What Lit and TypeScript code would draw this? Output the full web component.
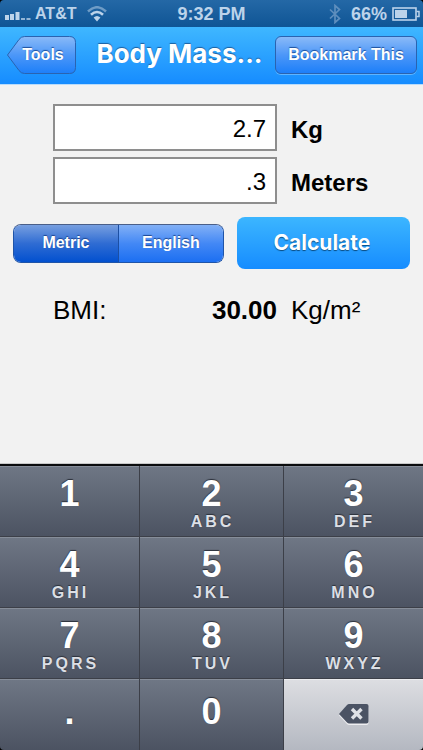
import { LitElement, html, css, nothing } from "lit";
import { customElement, state } from "lit/decorators.js";
import { classMap } from "lit/directives/class-map.js";

const KEYS: Array<[string, string]> = [
  ["1", ""],
  ["2", "ABC"],
  ["3", "DEF"],
  ["4", "GHI"],
  ["5", "JKL"],
  ["6", "MNO"],
  ["7", "PQRS"],
  ["8", "TUV"],
  ["9", "WXYZ"],
  [".", ""],
  ["0", ""],
];

@customElement("status-bar")
class StatusBar extends LitElement {
  static styles = css`
    :host {
      display: grid;
      grid-template-columns: 1fr auto 1fr;
      align-items: center;
      height: 27px;
      padding: 0 3px;
      box-sizing: border-box;
      border-radius: 4px 4px 0 0;
      background: linear-gradient(#2468a6, #0f5595);
      color: #bcd3ea;
      font: bold 18px/26px "Liberation Sans", Arial, sans-serif;
      white-space: nowrap;
    }
    .side {
      display: flex;
      align-items: center;
    }
    .signal {
      margin-left: 2px;
    }
    .carrier {
      font-size: 16px;
      margin: 0 11px 0 4px;
    }
    .right {
      justify-content: flex-end;
    }
    .bluetooth {
      margin-right: 10px;
    }
    .battery {
      margin-left: 5px;
    }
    svg {
      display: block;
    }
  `;

  render() {
    return html`
      <div class="side">
        <svg class="signal" width="26" height="12" viewBox="0 0 26 12" fill="#bcd3ea" aria-hidden="true">
          <path d="M0 7h4v5H0zM5 6h4v6H5zM10.500 4h4v8h-4z" />
          <path d="M16 10h4v2h-4zM21.500 10h4v2h-4z" opacity=".75" />
        </svg>
        <span class="carrier">AT&amp;T</span>
        <svg width="20" height="16" viewBox="0 0 20 16" fill="none" aria-hidden="true">
          <path d="M1 5.500Q10-3 19 5.500" stroke="#6f9cc6" stroke-width="2.500" />
          <path d="M4 8.800Q10 3.200 16 8.800" stroke="#bcd3ea" stroke-width="2.600" />
          <path d="M6.600 11.600Q10 8.200 13.400 11.600L10 15.400z" fill="#bcd3ea" />
        </svg>
      </div>
      <span>9:32 PM</span>
      <div class="side right">
        <svg class="bluetooth" width="12" height="20" viewBox="0 0 12 20" fill="none" aria-hidden="true">
          <path d="M1 5.500L10.500 14.500L6 18.500V1.500L10.500 5.500L1 14.500" stroke="#5e8ebd" stroke-width="1.700" />
        </svg>
        <span>66%</span>
        <svg class="battery" width="28" height="14" viewBox="0 0 28 14" aria-hidden="true">
          <rect x="1" y="1" width="23" height="12" fill="none" stroke="#bcd3ea" stroke-width="1.600" />
          <rect x="3" y="3" width="12" height="8" fill="#bcd3ea" />
          <path d="M24.500 4.500h2.500v5h-2.500" fill="none" stroke="#bcd3ea" stroke-width="1.500" />
        </svg>
      </div>
    `;
  }
}

@customElement("number-pad")
class NumberPad extends LitElement {
  static styles = css`
    :host {
      display: grid;
      grid-template-columns: 140fr 144fr 139fr;
      grid-auto-rows: 71px;
      border-top: 2px solid #0b0c0e;
      border-radius: 0 0 4px 4px;
      box-shadow: 0 -1px 0 #c9c9c9;
      overflow: hidden;
    }
    .key {
      display: flex;
      flex-direction: column;
      align-items: center;
      min-width: 0;
      margin: 0;
      padding: 9px 0 0;
      border: 0;
      border-right: 1px solid #3c3f48;
      border-bottom: 1px solid #3c3f48;
      border-radius: 0;
      background: linear-gradient(#6f7785, #4c5362);
      box-shadow: inset 0 1px 0 #868d99;
      color: #fff;
      font: bold 36px/38px "Liberation Sans", Arial, sans-serif;
      text-shadow: 0 -1px 1px #2b303a;
    }
    .key:nth-child(3n) {
      border-right: 0;
    }
    .key:nth-child(n + 10) {
      border-bottom: 0;
    }
    .letters {
      padding-left: 2px;
      color: #dcdfe5;
      font-size: 16px;
      line-height: 18px;
      letter-spacing: 3px;
    }
    .last {
      padding-top: 14px;
    }
    .delete {
      justify-content: center;
      padding: 0;
      background: linear-gradient(#dddee2, #b4b8c1);
      box-shadow: inset 0 1px 0 #ebebee;
    }
  `;

  private press(key: string) {
    this.dispatchEvent(new CustomEvent("key-press", { detail: key }));
  }

  render() {
    return html`
      ${KEYS.map(
        ([digit, letters], i) => html`<button
          type="button"
          class=${classMap({ key: true, last: i > 8 })}
          @click=${() => this.press(digit)}
        >
          <span>${digit}</span>
          ${letters ? html`<span class="letters">${letters}</span>` : nothing}
        </button>`
      )}
      <button type="button" class="key delete" aria-label="Delete" @click=${() => this.press("delete")}>
        <svg width="30" height="22" viewBox="0 0 30 22" aria-hidden="true">
          <path d="M0 11.500L8 2.700Q9 2 10 2H27.500Q29.500 2 29.500 4V19Q29.500 21 27.500 21H10Q9 21 8 20z" fill="#eeeef1" />
          <path d="M0 10L8 1Q9 0 10 0H27.500Q29.500 0 29.500 2V17.500Q29.500 19.500 27.500 19.500H10Q9 19.500 8 18.500z" fill="#4b5364" />
          <path d="M13 5L22.500 14.500M22.500 5L13 14.500" stroke="#dfe1e6" stroke-width="3.400" />
        </svg>
      </button>
    `;
  }
}

@customElement("app-root")
class AppRoot extends LitElement {
  static styles = css`
    :host {
      display: flex;
      flex-direction: column;
      min-height: 100vh;
      background: #000;
      color: #000;
      font-family: "Liberation Sans", Arial, sans-serif;
    }
    button {
      margin: 0;
      border: 0;
      padding: 0;
      color: #fff;
      font: bold 16px/20px "Liberation Sans", Arial, sans-serif;
      white-space: nowrap;
    }
    .nav {
      display: flex;
      align-items: center;
      height: 58px;
      box-sizing: border-box;
      padding: 0 6px 2px;
      border-bottom: 1px solid #b9dcfb;
      background: linear-gradient(#3fb7ff, #168cff);
    }
    .back {
      position: relative;
      width: 70px;
      height: 38px;
      padding-left: 4px;
      background: none;
      text-shadow: 0 -1px 1px #1c4f9c;
    }
    .back-shape {
      position: absolute;
      inset: 0;
    }
    .back-text {
      position: relative;
    }
    .title {
      flex: 1;
      margin: 0;
      padding: 0 0 2px 8px;
      color: #fff;
      font: bold 26px/32px Inter, "Open Sans", sans-serif;
      text-align: center;
      text-shadow: 0 -1px 1px #1c5f9f;
      white-space: nowrap;
    }
    .bookmark {
      width: 142px;
      height: 38px;
      border: 1px solid #2a63b0;
      border-radius: 6px;
      background: linear-gradient(#8abaf8, #4c97f8 50%, #1d7ff9);
      box-shadow: 0 1px 0 #5fb4ff;
      text-shadow: 0 -1px 1px #1c4f9c;
    }
    main {
      flex: 1;
      padding: 19px 0 20px;
      background: #f2f2f2;
    }
    .fields,
    .result {
      display: grid;
      grid-template-columns: 1fr 132px;
      column-gap: 14px;
      row-gap: 6px;
      align-items: center;
      padding-left: 53px;
    }
    .field {
      width: 100%;
      height: 47px;
      box-sizing: border-box;
      border: 2px solid #8e8e8e;
      border-radius: 0;
      padding: 3px 9px 0;
      background: #fff;
      color: #000;
      font: 24px/28px "Liberation Sans", Arial, sans-serif;
      text-align: right;
      outline: 0;
    }
    .unit {
      padding-top: 4px;
      font-size: 24px;
      font-weight: bold;
      line-height: 28px;
    }
    .actions {
      display: flex;
      align-items: center;
      gap: 13px;
      padding: 13px 13px 0;
    }
    .segments {
      flex: 211;
      display: flex;
      height: 39px;
      box-sizing: border-box;
      border: 1px solid #1f54a8;
      border-top-color: #4a5f88;
      border-radius: 8px;
      overflow: hidden;
    }
    .segment {
      flex: 1;
      background: linear-gradient(#82b0f6, #4388f5 50%, #1c6ff2);
      text-shadow: 0 -1px 1px #1c4590;
    }
    .segment + .segment {
      border-left: 1px solid #1c4fa3;
    }
    .selected {
      background: linear-gradient(#779fe0, #2f6cd3 50%, #0250cf);
    }
    .calculate {
      flex: 172;
      height: 52px;
      padding-right: 3px;
      border-radius: 8px;
      background: linear-gradient(#3cb6ff, #168cff);
      font: bold 21px/26px Inter, "Open Sans", sans-serif;
      text-shadow: 0 1px 1px #0b4c80;
    }
    .result {
      padding-top: 26px;
      font-size: 26px;
      line-height: 30px;
    }
    .bmi {
      display: flex;
      justify-content: space-between;
    }
  `;

  @state() private metric = true;
  @state() private weight = "2.7";
  @state() private size = ".3";
  @state() private bmi = "30.00";

  private calculate() {
    const factor = this.metric ? 1 : 703;
    this.bmi = ((Number(this.weight) * factor) / Number(this.size) ** 2).toFixed(2);
  }

  private onKey(e: CustomEvent<string>) {
    this.size = e.detail === "delete" ? this.size.slice(0, -1) : this.size + e.detail;
  }

  render() {
    return html`
      <status-bar></status-bar>
      <header class="nav">
        <button type="button" class="back">
          <svg class="back-shape" width="70" height="38" viewBox="0 0 70 38" aria-hidden="true">
            <defs>
              <linearGradient id="face" x1="0" y1="0" x2="0" y2="1">
                <stop offset="0" stop-color="#8abaf8" />
                <stop offset=".5" stop-color="#4c97f8" />
                <stop offset="1" stop-color="#1d7ff9" />
              </linearGradient>
            </defs>
            <path
              d="M1.500 19L13 3.500Q15 .5 18.500 .5H63.500Q69.500 .5 69.500 6.500V31.500Q69.500 37.500 63.500 37.500H18.500Q15 37.500 13 34.500z"
              fill="url(#face)"
              stroke="#2a63b0"
            />
          </svg>
          <span class="back-text">Tools</span>
        </button>
        <h1 class="title">Body Mass...</h1>
        <button type="button" class="bookmark">Bookmark This</button>
      </header>
      <main>
        <div class="fields">
          <input
            id="weight"
            class="field"
            inputmode="decimal"
            .value=${this.weight}
            @input=${(e: Event) => (this.weight = (e.target as HTMLInputElement).value)}
          />
          <label class="unit" for="weight">${this.metric ? "Kg" : "Pounds"}</label>
          <input
            id="size"
            class="field"
            inputmode="decimal"
            .value=${this.size}
            @input=${(e: Event) => (this.size = (e.target as HTMLInputElement).value)}
          />
          <label class="unit" for="size">${this.metric ? "Meters" : "Inches"}</label>
        </div>
        <div class="actions">
          <div class="segments" role="group">
            <button
              type="button"
              class=${classMap({ segment: true, selected: this.metric })}
              aria-pressed=${this.metric}
              @click=${() => (this.metric = true)}
            >
              Metric
            </button>
            <button
              type="button"
              class=${classMap({ segment: true, selected: !this.metric })}
              aria-pressed=${!this.metric}
              @click=${() => (this.metric = false)}
            >
              English
            </button>
          </div>
          <button type="button" class="calculate" @click=${this.calculate}>Calculate</button>
        </div>
        <div class="result">
          <div class="bmi"><span>BMI:</span><strong>${this.bmi}</strong></div>
          <span>${this.metric ? "Kg/m²" : "lb/in²"}</span>
        </div>
      </main>
      <number-pad @key-press=${this.onKey}></number-pad>
    `;
  }
}
